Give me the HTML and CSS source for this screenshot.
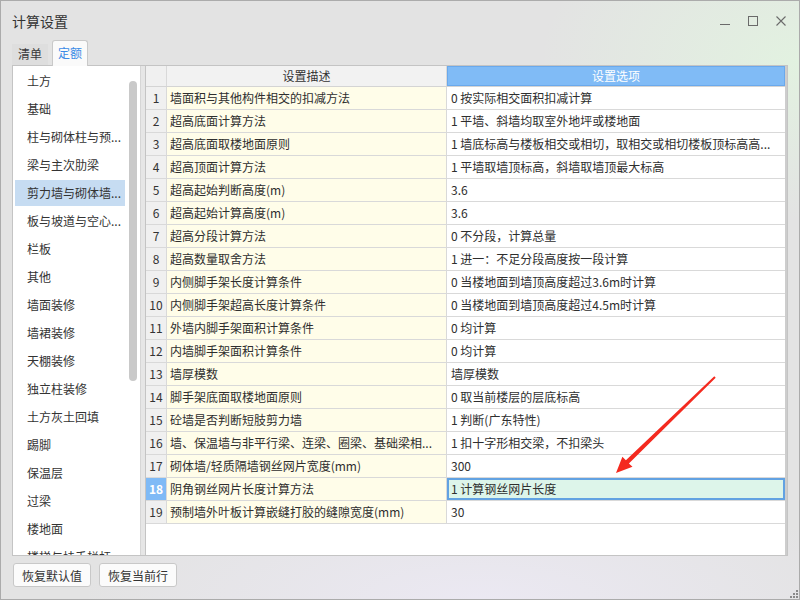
FILE: index.html
```html
<!DOCTYPE html>
<html lang="zh-CN">
<head>
<meta charset="utf-8">
<title>计算设置</title>
<link rel="stylesheet" href="styles.css">
</head>
<body>
<div class="window">
  <div class="titlebar">
    <span class="title">计算设置</span>
    <div class="controls">
      <svg class="ctl" width="10" height="10" viewBox="0 0 10 10"><path d="M0 8.5H10" stroke="#6a6a6a" stroke-width="1"/></svg>
      <svg class="ctl" width="10" height="10" viewBox="0 0 10 10"><rect x="0.5" y="0.5" width="9" height="9" fill="none" stroke="#6a6a6a" stroke-width="1"/></svg>
      <svg class="ctl" width="10" height="10" viewBox="0 0 10 10"><path d="M0.5 0.5L9.5 9.5M9.5 0.5L0.5 9.5" stroke="#6a6a6a" stroke-width="1.1"/></svg>
    </div>
  </div>
  <div class="tabs">
    <div class="tab">清单</div>
    <div class="tab active">定额</div>
  </div>
  <div class="page">
    <div class="sidebar">
      <div class="list">
        <div class="item">土方</div>
        <div class="item">基础</div>
        <div class="item">柱与砌体柱与预...</div>
        <div class="item">梁与主次肋梁</div>
        <div class="item selected">剪力墙与砌体墙...</div>
        <div class="item">板与坡道与空心...</div>
        <div class="item">栏板</div>
        <div class="item">其他</div>
        <div class="item">墙面装修</div>
        <div class="item">墙裙装修</div>
        <div class="item">天棚装修</div>
        <div class="item">独立柱装修</div>
        <div class="item">土方灰土回填</div>
        <div class="item">踢脚</div>
        <div class="item">保温层</div>
        <div class="item">过梁</div>
        <div class="item">楼地面</div>
        <div class="item">楼梯与扶手栏杆</div>
      </div>
      <div class="scrolltrack"><div class="thumb"></div></div>
    </div>
    <div class="splitter"></div>
    <div class="grid">
      <div class="row head">
        <div class="cell num"></div>
        <div class="cell hdesc">设置描述</div>
        <div class="cell hopt">设置选项</div>
      </div>
      <div class="row"><div class="cell num">1</div><div class="cell desc">墙面积与其他构件相交的扣减方法</div><div class="cell opt">0 按实际相交面积扣减计算</div></div>
      <div class="row"><div class="cell num">2</div><div class="cell desc">超高底面计算方法</div><div class="cell opt">1 平墙、斜墙均取室外地坪或楼地面</div></div>
      <div class="row"><div class="cell num">3</div><div class="cell desc">超高底面取楼地面原则</div><div class="cell opt">1 墙底标高与楼板相交或相切，取相交或相切楼板顶标高高...</div></div>
      <div class="row"><div class="cell num">4</div><div class="cell desc">超高顶面计算方法</div><div class="cell opt">1 平墙取墙顶标高，斜墙取墙顶最大标高</div></div>
      <div class="row"><div class="cell num">5</div><div class="cell desc">超高起始判断高度(m)</div><div class="cell opt">3.6</div></div>
      <div class="row"><div class="cell num">6</div><div class="cell desc">超高起始计算高度(m)</div><div class="cell opt">3.6</div></div>
      <div class="row"><div class="cell num">7</div><div class="cell desc">超高分段计算方法</div><div class="cell opt">0 不分段，计算总量</div></div>
      <div class="row"><div class="cell num">8</div><div class="cell desc">超高数量取舍方法</div><div class="cell opt">1 进一：不足分段高度按一段计算</div></div>
      <div class="row"><div class="cell num">9</div><div class="cell desc">内侧脚手架长度计算条件</div><div class="cell opt">0 当楼地面到墙顶高度超过3.6m时计算</div></div>
      <div class="row"><div class="cell num">10</div><div class="cell desc">内侧脚手架超高长度计算条件</div><div class="cell opt">0 当楼地面到墙顶高度超过4.5m时计算</div></div>
      <div class="row"><div class="cell num">11</div><div class="cell desc">外墙内脚手架面积计算条件</div><div class="cell opt">0 均计算</div></div>
      <div class="row"><div class="cell num">12</div><div class="cell desc">内墙脚手架面积计算条件</div><div class="cell opt">0 均计算</div></div>
      <div class="row"><div class="cell num">13</div><div class="cell desc">墙厚模数</div><div class="cell opt">墙厚模数</div></div>
      <div class="row"><div class="cell num">14</div><div class="cell desc">脚手架底面取楼地面原则</div><div class="cell opt">0 取当前楼层的层底标高</div></div>
      <div class="row"><div class="cell num">15</div><div class="cell desc">砼墙是否判断短肢剪力墙</div><div class="cell opt">1 判断(广东特性)</div></div>
      <div class="row"><div class="cell num">16</div><div class="cell desc">墙、保温墙与非平行梁、连梁、圈梁、基础梁相...</div><div class="cell opt">1 扣十字形相交梁，不扣梁头</div></div>
      <div class="row"><div class="cell num">17</div><div class="cell desc">砌体墙/轻质隔墙钢丝网片宽度(mm)</div><div class="cell opt">300</div></div>
      <div class="row current"><div class="cell num">18</div><div class="cell desc">阴角钢丝网片长度计算方法</div><div class="cell opt">1 计算钢丝网片长度</div></div>
      <div class="row"><div class="cell num">19</div><div class="cell desc">预制墙外叶板计算嵌缝打胶的缝隙宽度(mm)</div><div class="cell opt">30</div></div>
    </div>
  </div>
  <div class="footer">
    <button class="btn">恢复默认值</button>
    <button class="btn">恢复当前行</button>
    <svg class="grip" width="9" height="9" viewBox="0 0 9 9">
      <rect x="7" y="1" width="2" height="2" fill="#8a8a8a"/>
      <rect x="4" y="4" width="2" height="2" fill="#8a8a8a"/>
      <rect x="7" y="4" width="2" height="2" fill="#8a8a8a"/>
      <rect x="1" y="7" width="2" height="2" fill="#8a8a8a"/>
      <rect x="4" y="7" width="2" height="2" fill="#8a8a8a"/>
      <rect x="7" y="7" width="2" height="2" fill="#8a8a8a"/>
    </svg>
  </div>
  <svg class="arrow" width="800" height="600" viewBox="0 0 800 600">
    <polygon points="616,473 632.5,466.8 628.9,463.4 715.7,377.7 714.3,376.3 625.9,460.2 622.4,456.8" fill="#f42a1f"/>
  </svg>
</div>
</body>
</html>
```

FILE: styles.css
```css
html, body {
  margin: 0;
  padding: 0;
}
body {
  width: 800px;
  height: 600px;
  font-family: "Noto Sans CJK SC", "Noto Sans", sans-serif;
  font-size: 12px;
  color: #2e2e2e;
}
.window {
  position: relative;
  width: 800px;
  height: 600px;
  box-sizing: border-box;
  border: 1px solid #ababab;
  display: flex;
  flex-direction: column;
  background:
    radial-gradient(ellipse 260px 160px at 100% 10%, rgba(226, 243, 224, 0.9), rgba(226, 243, 224, 0)),
    radial-gradient(ellipse 400px 120px at 60% 100%, rgba(236, 233, 244, 0.9), rgba(236, 233, 244, 0)),
    #e3e3e3;
  overflow: hidden;
}
.titlebar {
  height: 39px;
  flex: none;
  display: flex;
  align-items: center;
  padding: 0 13px 0 11px;
}
.title {
  font-size: 14px;
  color: #333;
  line-height: 20px;
}
.controls {
  margin-left: auto;
  display: flex;
  gap: 18px;
  align-items: center;
}
.ctl {
  display: block;
}
.tabs {
  height: 25px;
  flex: none;
  display: flex;
  align-items: flex-end;
  padding-left: 11px;
  gap: 4px;
}
.tab {
  width: 36px;
  height: 21px;
  line-height: 20px;
  text-align: center;
  color: #3a3a3a;
  background: #dedede;
  box-sizing: border-box;
}
.tab.active {
  position: relative;
  z-index: 1;
  height: 26px;
  line-height: 24px;
  margin-bottom: -1px;
  background: #fafafa;
  border: 1px solid #c9c9c9;
  border-bottom: none;
  border-radius: 3px 3px 0 0;
  color: #3a8be6;
}
.page {
  height: 491px;
  flex: none;
  margin: 0 11px;
  box-sizing: border-box;
  border: 1px solid #c4c4c4;
  display: flex;
  background: #e8e8e8;
}
.sidebar {
  width: 127px;
  flex: none;
  background: #fff;
  display: flex;
  overflow: hidden;
}
.list {
  flex: 1;
  padding-top: 1px;
  min-width: 0;
  display: flex;
  flex-direction: column;
}
.item {
  flex: none;
  height: 26px;
  margin: 1px 2px;
  padding-left: 12px;
  line-height: 26px;
  white-space: nowrap;
  overflow: hidden;
  color: #333;
}
.item.selected {
  background: #c6dcf2;
}
.scrolltrack {
  width: 13px;
  flex: none;
  padding-top: 15px;
}
.thumb {
  width: 8px;
  height: 300px;
  margin-left: 2px;
  border-radius: 4px;
  background: #c9c9c9;
}
.splitter {
  width: 6px;
  flex: none;
  box-sizing: border-box;
  border-left: 1px solid #d6d6d6;
  border-right: 1px solid #c4c4c4;
  background: #e6e6e6;
}
.grid {
  flex: 1;
  min-width: 0;
  background: #fff;
  border-right: 2px solid #cdcdcd;
}
.row {
  display: grid;
  grid-template-columns: 21px 280px 1fr;
  height: 23px;
  box-sizing: border-box;
  border-bottom: 1px solid #d9d9d9;
}
.cell {
  border-right: 1px solid #d9d9d9;
  line-height: 22px;
  white-space: nowrap;
  overflow: hidden;
}
.cell.opt, .cell.hopt {
  border-right: none;
}
.num {
  background: #f0f0f0;
  text-align: center;
  color: #333;
}
.desc {
  background: #fffde9;
  padding-left: 3px;
}
.opt {
  padding-left: 4px;
}
.row.head {
  height: 21px;
  border-bottom-color: #d4d4d4;
}
.row.head .cell {
  line-height: 20px;
}
.hdesc {
  background: #f2f2f2;
  text-align: center;
  color: #333;
}
.hopt {
  background: #80bbf6;
  color: #fff;
  text-align: center;
  box-shadow: inset 0 0 0 1px #6aa9ec;
}
.row.current .num {
  background: #7fbaf6;
  color: #fff;
  font-weight: bold;
}
.row.current .opt {
  background: #ddf5ea;
  box-shadow: inset 0 0 0 2px #62a2e2;
}
.footer {
  flex: 1;
  display: flex;
  align-items: flex-start;
  gap: 8px;
  padding: 7px 1px 0 12px;
}
.btn {
  width: 78px;
  height: 24px;
  padding: 0;
  box-sizing: border-box;
  border: 1px solid #c8c8c8;
  border-radius: 3px;
  background: #fbfbfb;
  font-family: "Noto Sans CJK SC", "Noto Sans", sans-serif;
  font-size: 12px;
  color: #333;
}
.grip {
  margin-left: auto;
  align-self: flex-end;
  margin-bottom: 1px;
}
.arrow {
  position: absolute;
  left: -1px;
  top: -1px;
  pointer-events: none;
}
```
